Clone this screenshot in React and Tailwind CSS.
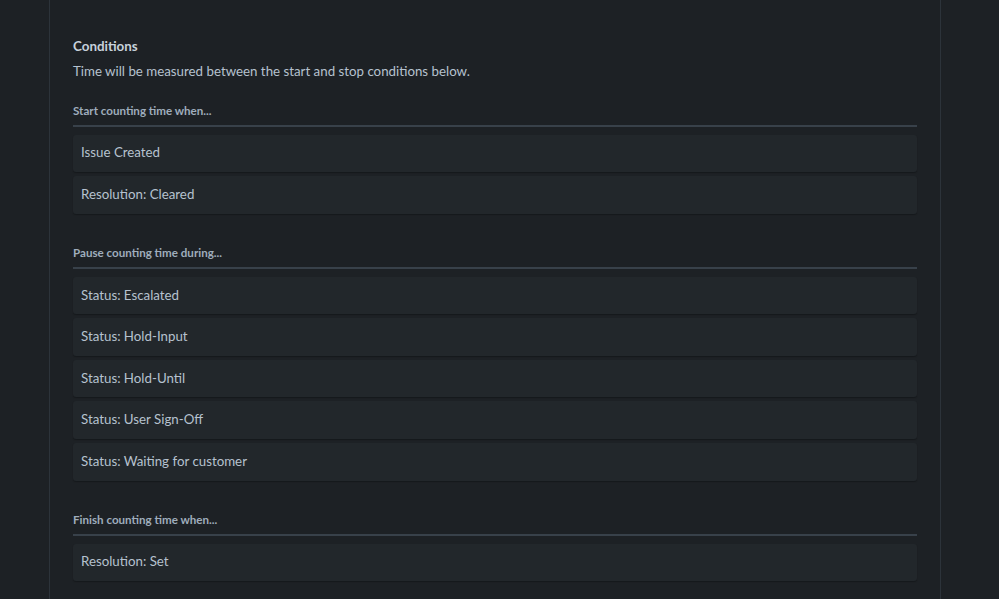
import React from 'react';

const sections = [
  {
    title: 'Start counting time when...',
    items: ['Issue Created', 'Resolution: Cleared'],
  },
  {
    title: 'Pause counting time during...',
    items: [
      'Status: Escalated',
      'Status: Hold-Input',
      'Status: Hold-Until',
      'Status: User Sign-Off',
      'Status: Waiting for customer',
    ],
  },
  {
    title: 'Finish counting time when...',
    items: ['Resolution: Set'],
  },
];

function ConditionSection({ title, items }) {
  return (
    <section className="mt-[31.5px] first:mt-0">
      <h3 className="text-[11.6px] font-bold leading-[16px] text-[#9fadbc]">{title}</h3>
      <div className="mt-[6px] h-[2px] bg-[#38414a]" />
      <div className="mt-[7.5px] flex flex-col gap-[4px]">
        {items.map((item) => (
          <div
            key={item}
            className="flex h-[37.6px] items-center rounded-[3px] bg-[#22272b] px-2 text-[13.3px] text-[#b6c2cf] shadow-[0_1px_1px_#16191c]"
          >
            {item}
          </div>
        ))}
      </div>
    </section>
  );
}

export default function App() {
  return (
    <div
      className="min-h-[599px] w-full overflow-hidden bg-[#1d2125]"
      style={{ fontFamily: '"Segoe UI", Lato, "Noto Sans", sans-serif' }}
    >
      <div className="ml-[49px] min-h-[599px] w-[892px] border-x border-[#2c333a] px-[23px] pt-[37px]">
        <h2 className="text-[13.4px] font-bold leading-[18px] text-[#c7d1db]">Conditions</h2>
        <p className="mt-[6px] text-[13.3px] leading-[20px] text-[#b6c2cf]">
          Time will be measured between the start and stop conditions below.
        </p>
        <div className="mt-[22px]">
          {sections.map((s) => (
            <ConditionSection key={s.title} title={s.title} items={s.items} />
          ))}
        </div>
      </div>
    </div>
  );
}
